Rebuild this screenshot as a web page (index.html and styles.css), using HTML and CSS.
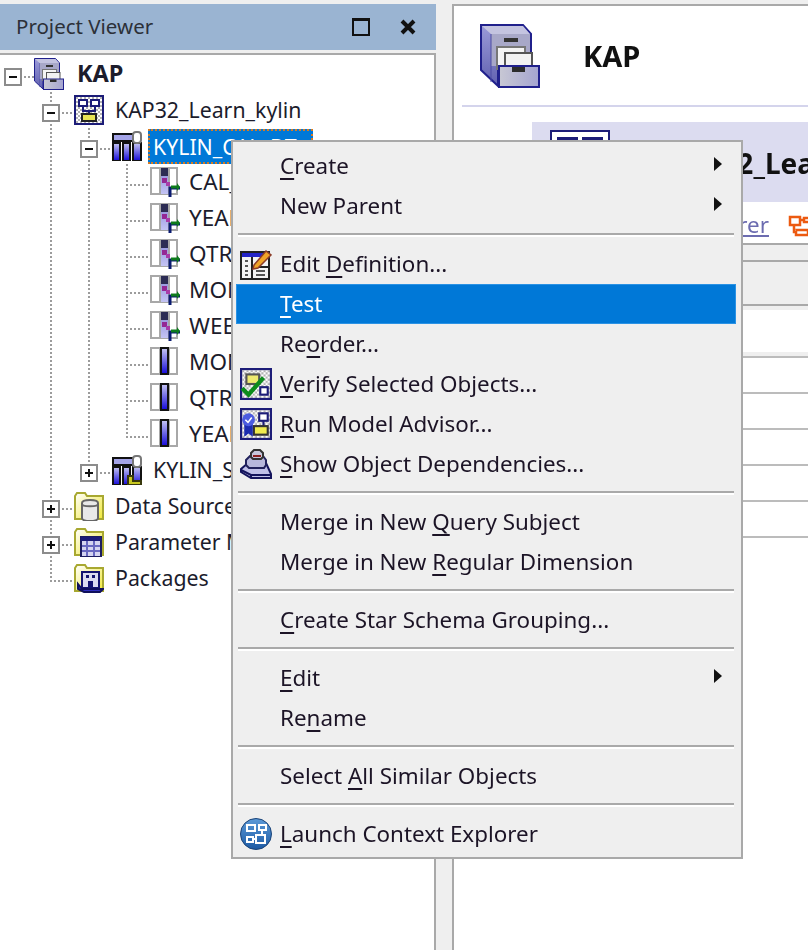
FILE: index.html
```html
<!DOCTYPE html>
<html lang="en">
<head>
    <meta charset="UTF-8">
    <title>Project Viewer</title>
    <link rel="stylesheet" href="styles.css">
</head>
<body>
    <!-- shared icons -->
    <svg class="icon-defs" aria-hidden="true">
        <defs>
            <pattern id="checker" width="4" height="4" patternUnits="userSpaceOnUse">
                <rect width="4" height="4" fill="#fff"/>
                <rect width="2" height="2" fill="#b4b4b4"/>
                <rect x="2" y="2" width="2" height="2" fill="#b4b4b4"/>
            </pattern>
            <linearGradient id="colBlue" x1="0" y1="0" x2="0" y2="1">
                <stop offset="0" stop-color="#c8c8f4"/>
                <stop offset="1" stop-color="#1408d8"/>
            </linearGradient>
            <linearGradient id="colPale" x1="0" y1="0" x2="0" y2="1">
                <stop offset="0" stop-color="#8a8ad8"/>
                <stop offset="1" stop-color="#c4c4f4"/>
            </linearGradient>
            <linearGradient id="drawerFace" x1="0" y1="0" x2="1" y2="0">
                <stop offset="0" stop-color="#c8c8d4"/>
                <stop offset="1" stop-color="#a4a4d0"/>
            </linearGradient>
            <linearGradient id="cabSide" x1="0" y1="0" x2="0" y2="1">
                <stop offset="0" stop-color="#9a9ad8"/>
                <stop offset="1" stop-color="#6060b0"/>
            </linearGradient>
            <linearGradient id="folderFill" x1="0" y1="0" x2="1" y2="1">
                <stop offset="0" stop-color="#fff"/>
                <stop offset="1" stop-color="#f0e838"/>
            </linearGradient>
            <linearGradient id="orb" x1="0" y1="0" x2="0" y2="1">
                <stop offset="0" stop-color="#5c9ad8"/>
                <stop offset="1" stop-color="#1c5aa4"/>
            </linearGradient>

            <symbol id="i-minus" viewBox="0 0 18 18">
                <rect x="1" y="1" width="16" height="16" fill="#fff" stroke="#8c8c8c" stroke-width="2"/>
                <rect x="5" y="8" width="8" height="2" fill="#111"/>
            </symbol>
            <symbol id="i-plus" viewBox="0 0 18 18">
                <rect x="1" y="1" width="16" height="16" fill="#fff" stroke="#8c8c8c" stroke-width="2"/>
                <rect x="5" y="8" width="8" height="2" fill="#111"/>
                <rect x="8" y="5" width="2" height="8" fill="#111"/>
            </symbol>

            <symbol id="i-cabinet" viewBox="0 0 60 64">
                <path d="M1 1H43L51 10V40H18V62L1 46Z" fill="url(#cabSide)" stroke="#20208c" stroke-width="2"/>
                <path d="M2 2H43L50 10H11Z" fill="#c4c4e0"/>
                <rect x="11" y="10" width="39" height="32" fill="#a8a8c8"/>
                <path d="M11 10V58" stroke="#4c4ca4" stroke-width="1"/>
                <rect x="24" y="14" width="14" height="4" fill="#333"/>
                <rect x="17" y="23" width="28" height="22" fill="#f4f4f4" stroke="#777" stroke-width="2"/>
                <rect x="25" y="29" width="27" height="16" fill="#f2f2f2" stroke="#555" stroke-width="2"/>
                <rect x="19" y="42" width="40" height="21" fill="url(#drawerFace)" stroke="#20208c" stroke-width="2"/>
                <rect x="32" y="43" width="13" height="5" fill="#2c2c2c"/>
            </symbol>

            <symbol id="i-model" viewBox="0 0 30 30">
                <rect x="1" y="1" width="28" height="28" fill="url(#checker)" stroke="#1c1c78" stroke-width="2"/>
                <rect x="5" y="5" width="8" height="6" fill="#fff" stroke="#1c1c78" stroke-width="2"/>
                <rect x="17" y="5" width="8" height="6" fill="#fff" stroke="#1c1c78" stroke-width="2"/>
                <path d="M9 11V16H21V11M15 16V20" fill="none" stroke="#1c1c78" stroke-width="2"/>
                <rect x="8" y="19" width="14" height="7" fill="#e8e454" stroke="#222" stroke-width="2"/>
            </symbol>
            <symbol id="i-model-large" viewBox="0 0 60 60">
                <rect x="1" y="1" width="58" height="58" fill="#fff" stroke="#1c1c78" stroke-width="2"/>
                <rect x="9" y="9" width="17" height="14" fill="#fff" stroke="#1c1c78" stroke-width="4"/>
                <rect x="34" y="9" width="17" height="14" fill="#fff" stroke="#1c1c78" stroke-width="4"/>
            </symbol>

            <symbol id="i-subject" viewBox="0 0 30 30">
                <rect x="1" y="3" width="24" height="7" fill="#a4a4e8" stroke="#111" stroke-width="2"/>
                <rect x="1" y="12" width="7" height="18" fill="url(#colBlue)" stroke="#111" stroke-width="2"/>
                <rect x="11" y="12" width="7" height="18" fill="url(#colBlue)" stroke="#111" stroke-width="2"/>
                <rect x="21" y="12" width="8" height="18" fill="url(#colBlue)" stroke="#111" stroke-width="2"/>
                <rect x="21" y="1" width="8" height="11" rx="3" fill="#fff" stroke="#777" stroke-width="2"/>
            </symbol>
            <symbol id="i-subject-key" viewBox="0 0 30 30">
                <use href="#i-subject"/>
                <path d="M16 30V21H21V26H29V30Z" fill="#c8c820" stroke="#38380c" stroke-width="2"/>
            </symbol>

            <symbol id="i-calc" viewBox="0 0 30 30">
                <rect x="1" y="1" width="26" height="26" fill="#fff" stroke="#a8a8a8" stroke-width="2"/>
                <path d="M10 1V27M19 1V27" stroke="#a8a8a8" stroke-width="2"/>
                <rect x="11" y="1" width="7" height="26" fill="url(#colPale)"/>
                <rect x="11" y="1" width="7" height="8" fill="#2c2c54"/>
                <rect x="12" y="11" width="5" height="5" fill="#942894"/>
                <rect x="16" y="15" width="4" height="4" fill="#a83ca8"/>
                <path d="M20 30V21H30" fill="none" stroke="#0a1a70" stroke-width="3"/>
                <path d="M21 20H27" stroke="#0e7c1c" stroke-width="3"/>
                <path d="M27 16L30 20L27 24Z" fill="#0e7c1c"/>
            </symbol>
            <symbol id="i-measure" viewBox="0 0 30 30">
                <rect x="1" y="1" width="26" height="26" fill="#fff" stroke="#a8a8a8" stroke-width="2"/>
                <path d="M10 1V27M19 1V27" stroke="#a8a8a8" stroke-width="2"/>
                <rect x="11" y="1" width="7" height="26" fill="url(#colBlue)" stroke="#111" stroke-width="2"/>
            </symbol>

            <symbol id="i-folder" viewBox="0 0 30 30">
                <path d="M1 28V5L3 2H11L13 5H29V28Z" fill="url(#folderFill)" stroke="#a8a830" stroke-width="2"/>
            </symbol>
            <symbol id="i-folder-db" viewBox="0 0 30 30">
                <use href="#i-folder"/>
                <path d="M8 12C8 8 24 8 24 12V27C24 31 8 31 8 27Z" fill="#e8e8e8" stroke="#666" stroke-width="2"/>
                <path d="M8 13C8 16 24 16 24 13" fill="none" stroke="#666" stroke-width="2"/>
            </symbol>
            <symbol id="i-folder-param" viewBox="0 0 30 30">
                <use href="#i-folder"/>
                <rect x="7" y="10" width="20" height="20" fill="#d4d4f0" stroke="#1c1c60" stroke-width="2"/>
                <rect x="7" y="10" width="20" height="4" fill="#1c1c78"/>
                <path d="M8 19H26M8 24H26M13 14V29M20 14V29" stroke="#6868c0" stroke-width="2"/>
            </symbol>
            <symbol id="i-folder-pkg" viewBox="0 0 30 30">
                <use href="#i-folder"/>
                <rect x="8" y="9" width="17" height="16" fill="#dcdcf0" stroke="#141470" stroke-width="2"/>
                <rect x="12" y="12" width="3" height="3" fill="#141470"/>
                <rect x="18" y="12" width="3" height="3" fill="#141470"/>
                <rect x="14" y="18" width="5" height="7" fill="#141470"/>
                <path d="M4 21V26L10 29H26L29 26H8Z" fill="#3030c0" stroke="#10105c" stroke-width="2"/>
            </symbol>

            <symbol id="i-edit" viewBox="0 0 32 32">
                <rect x="1" y="4" width="28" height="27" fill="#f4f4f4" stroke="#222" stroke-width="2"/>
                <rect x="2" y="5" width="26" height="4" fill="#2424c8"/>
                <path d="M12 9V30M12 19H28" stroke="#222" stroke-width="2"/>
                <path d="M5 13H8M5 18H8M5 23H8M5 27H8M16 23H25M16 27H25" stroke="#555" stroke-width="2"/>
                <path d="M14 17L26 3L31 7L18 20L13 21Z" fill="#f0a428" stroke="#8c3c28" stroke-width="1.5"/>
            </symbol>
            <symbol id="i-verify" viewBox="0 0 30 30">
                <rect x="1" y="1" width="28" height="28" fill="url(#checker)" stroke="#1c1c78" stroke-width="2"/>
                <rect x="6" y="6" width="12" height="9" fill="#eeea70" stroke="#555" stroke-width="2"/>
                <rect x="19" y="18" width="7" height="7" fill="#fff" stroke="#1c1c78" stroke-width="2"/>
                <path d="M2 19L8 25L22 9" fill="none" stroke="#0c8c1c" stroke-width="4"/>
            </symbol>
            <symbol id="i-advisor" viewBox="0 0 30 30">
                <rect x="1" y="1" width="28" height="28" fill="url(#checker)" stroke="#1c1c78" stroke-width="2"/>
                <rect x="18" y="5" width="8" height="7" fill="#fff" stroke="#1c1c78" stroke-width="2"/>
                <path d="M22 12V17" stroke="#1c1c78" stroke-width="2"/>
                <rect x="13" y="17" width="13" height="8" fill="#f0ec50" stroke="#333" stroke-width="2"/>
                <path d="M4 15V27L8 24L12 27V15Z" fill="#1c2cb0"/>
                <circle cx="8" cy="11" r="6" fill="#4c5ce0"/>
                <path d="M5 11L7.5 13.5L11 9" fill="none" stroke="#fff" stroke-width="1.5"/>
            </symbol>
            <symbol id="i-deps" viewBox="0 0 32 32">
                <path d="M1 21L8 15H26L31 26V30H11L1 24Z" fill="#c0c0e8" stroke="#14145c" stroke-width="2"/>
                <path d="M1 22L11 27H31M11 27V30" fill="none" stroke="#14145c" stroke-width="2"/>
                <path d="M6 12L10 8H23L26 12V17L24 20H9L6 17Z" fill="#b8b8dc" stroke="#22225c" stroke-width="2"/>
                <path d="M11 5L14 2H20L23 5V9L21 11H13L11 9Z" fill="#c8c8dc" stroke="#333" stroke-width="2"/>
                <path d="M13 8H21" stroke="#8c2020" stroke-width="2"/>
            </symbol>
            <symbol id="i-launch" viewBox="0 0 32 32">
                <circle cx="16" cy="16" r="15.5" fill="url(#orb)" stroke="#1c4478" stroke-width="1"/>
                <g fill="none" stroke="#fff" stroke-width="2">
                    <rect x="7" y="7" width="8" height="6"/>
                    <rect x="19" y="7" width="7" height="5"/>
                    <rect x="7" y="19" width="6" height="5"/>
                    <rect x="16" y="17" width="9" height="8"/>
                    <path d="M22 12V17M13 21H16"/>
                </g>
            </symbol>
            <symbol id="i-context" viewBox="0 0 24 22">
                <g fill="#fff" stroke="#ec5a10" stroke-width="2.5">
                    <rect x="2" y="2" width="10" height="8"/>
                    <rect x="16" y="3" width="10" height="4"/>
                    <rect x="8" y="15" width="12" height="5"/>
                    <path d="M6 10V17H8M12 5H16"/>
                </g>
            </symbol>
        </defs>
    </svg>

    <div class="workspace">
        <div class="viewer">
            <div class="viewer-title">
                <span class="viewer-name">Project Viewer</span>
                <span class="win-restore"></span>
                <svg class="win-close" viewBox="0 0 16 16" aria-label="Close"><path d="M2 2L14 14M14 2L2 14" stroke="#111" stroke-width="4"/></svg>
            </div>
            <div class="tree-panel">
                <ul class="tree">
                    <li>
                        <div class="row"><svg class="toggle"><use href="#i-minus"/></svg><svg class="node-icon root-icon"><use href="#i-cabinet"/></svg><span class="label bold">KAP</span></div>
                        <ul>
                            <li>
                                <div class="row"><svg class="toggle"><use href="#i-minus"/></svg><svg class="node-icon"><use href="#i-model"/></svg><span class="label">KAP32_Learn_kylin</span></div>
                                <ul>
                                    <li>
                                        <div class="row"><svg class="toggle"><use href="#i-minus"/></svg><svg class="node-icon"><use href="#i-subject"/></svg><span class="label selected">KYLIN_CAL_DT</span></div>
                                        <ul class="leaves">
                                            <li><div class="row"><svg class="node-icon"><use href="#i-calc"/></svg><span class="label">CAL_DT</span></div></li>
                                            <li><div class="row"><svg class="node-icon"><use href="#i-calc"/></svg><span class="label">YEAR_BEG_DT</span></div></li>
                                            <li><div class="row"><svg class="node-icon"><use href="#i-calc"/></svg><span class="label">QTR_BEG_DT</span></div></li>
                                            <li><div class="row"><svg class="node-icon"><use href="#i-calc"/></svg><span class="label">MONTH_BEG_DT</span></div></li>
                                            <li><div class="row"><svg class="node-icon"><use href="#i-calc"/></svg><span class="label">WEEK_BEG_DT</span></div></li>
                                            <li><div class="row"><svg class="node-icon"><use href="#i-measure"/></svg><span class="label">MONTH_CNT</span></div></li>
                                            <li><div class="row"><svg class="node-icon"><use href="#i-measure"/></svg><span class="label">QTR_CNT</span></div></li>
                                            <li><div class="row"><svg class="node-icon"><use href="#i-measure"/></svg><span class="label">YEAR_CNT</span></div></li>
                                        </ul>
                                    </li>
                                    <li>
                                        <div class="row"><svg class="toggle"><use href="#i-plus"/></svg><svg class="node-icon"><use href="#i-subject-key"/></svg><span class="label">KYLIN_SALES</span></div>
                                    </li>
                                </ul>
                            </li>
                            <li><div class="row"><svg class="toggle"><use href="#i-plus"/></svg><svg class="node-icon"><use href="#i-folder-db"/></svg><span class="label">Data Sources</span></div></li>
                            <li><div class="row"><svg class="toggle"><use href="#i-plus"/></svg><svg class="node-icon"><use href="#i-folder-param"/></svg><span class="label">Parameter Maps</span></div></li>
                            <li><div class="row no-toggle"><svg class="node-icon"><use href="#i-folder-pkg"/></svg><span class="label">Packages</span></div></li>
                        </ul>
                    </li>
                </ul>
            </div>
        </div>

        <div class="explorer">
            <div class="explorer-head">
                <svg class="cabinet"><use href="#i-cabinet"/></svg>
                <span class="explorer-name">KAP</span>
            </div>
            <div class="explorer-rule"></div>
            <div class="banner">
                <svg class="banner-icon"><use href="#i-model-large"/></svg>
                <span class="banner-name">KAP32_Learn_kylin</span>
            </div>
            <div class="links">
                <a class="link" href="#">Launch Context Explorer</a>
                <svg class="context-icon"><use href="#i-context"/></svg>
            </div>
            <div class="tabs"></div>
            <div class="table-tools"></div>
            <div class="table-head"></div>
            <div class="table-row"></div>
            <div class="table-row"></div>
            <div class="table-row"></div>
            <div class="table-row"></div>
            <div class="table-row"></div>
            <div class="table-row"></div>
        </div>
    </div>

    <div class="context-menu">
        <div class="item"><span class="text"><u>C</u>reate</span><i class="arrow"></i></div>
        <div class="item"><span class="text">New Parent</span><i class="arrow"></i></div>
        <div class="sep"></div>
        <div class="item"><svg class="item-icon"><use href="#i-edit"/></svg><span class="text">Edit <u>D</u>efinition...</span></div>
        <div class="item active"><span class="text"><u>T</u>est</span></div>
        <div class="item"><span class="text">Re<u>o</u>rder...</span></div>
        <div class="item"><svg class="item-icon"><use href="#i-verify"/></svg><span class="text"><u>V</u>erify Selected Objects...</span></div>
        <div class="item"><svg class="item-icon"><use href="#i-advisor"/></svg><span class="text"><u>R</u>un Model Advisor...</span></div>
        <div class="item"><svg class="item-icon"><use href="#i-deps"/></svg><span class="text"><u>S</u>how Object Dependencies...</span></div>
        <div class="sep"></div>
        <div class="item"><span class="text">Merge in New <u>Q</u>uery Subject</span></div>
        <div class="item"><span class="text">Merge in New <u>R</u>egular Dimension</span></div>
        <div class="sep"></div>
        <div class="item"><span class="text"><u>C</u>reate Star Schema Grouping...</span></div>
        <div class="sep"></div>
        <div class="item"><span class="text"><u>E</u>dit</span><i class="arrow"></i></div>
        <div class="item"><span class="text">Re<u>n</u>ame</span></div>
        <div class="sep"></div>
        <div class="item"><span class="text">Select <u>A</u>ll Similar Objects</span></div>
        <div class="sep"></div>
        <div class="item"><svg class="item-icon"><use href="#i-launch"/></svg><span class="text"><u>L</u>aunch Context Explorer</span></div>
    </div>
</body>
</html>
```

FILE: styles.css
```css
:root {
    --chrome: #efefef;
    --edge: #a9a9a9;
    --guide: #9c9c9c;
    --text: #1c1c2c;
    --select: #0078d7;
    /* the capture is an upscaled one, everything is a little soft */
    --soft: blur(0.4px);
}
html, body {
    margin: 0;
    padding: 0;
}
body {
    position: relative;
    height: 950px;
    overflow: hidden;
    background-color: var(--chrome);
    color: var(--text);
    font-family: "Noto Sans", "Open Sans", sans-serif;
    font-size: 21.3px;
}
.icon-defs {
    position: absolute;
    width: 0;
    height: 0;
}
.workspace {
    display: flex;
    height: 946px;
    padding-top: 4px;
    filter: var(--soft);
}

/* Left pane */
.viewer {
    display: flex;
    flex-direction: column;
    width: 436px;
    flex: none;
}
.viewer-title {
    display: flex;
    align-items: center;
    height: 46px;
    flex: none;
    padding-left: 16px;
    background-color: #9ab4d2;
}
.viewer-name {
    flex: 1;
    margin-top: -2px;
    font-size: 20.5px;
    color: #2c3038;
}
.win-restore {
    width: 14px;
    height: 13px;
    border: 2px solid #111;
    border-top-width: 3px;
    margin-right: 30px;
}
.win-close {
    width: 16px;
    height: 16px;
    margin-right: 20px;
}
.tree-panel {
    flex: 1;
    margin-top: 3px;
    border-top: 2px solid var(--edge);
    border-right: 2px solid var(--edge);
    background-color: #fff;
    padding-top: 1px;
}

/* Tree */
.tree, .tree ul {
    list-style: none;
    margin: 0;
    padding: 0;
}
.tree ul {
    padding-left: 38px;
}
.tree li {
    position: relative;
}
.tree ul > li::before {
    content: "";
    position: absolute;
    left: 12px;
    top: 0;
    bottom: 0;
    width: 2px;
    background: linear-gradient(var(--guide) 50%, transparent 50%) 0 0 / 2px 4px repeat-y;
}
.tree ul > li:last-child::before {
    bottom: auto;
    height: 21px;
}
.tree li::after {
    content: "";
    position: absolute;
    left: 12px;
    top: 20px;
    width: 22px;
    height: 2px;
    background: linear-gradient(90deg, var(--guide) 50%, transparent 50%) 0 0 / 4px 2px repeat-x;
}
.row {
    position: relative;
    z-index: 1;
    display: flex;
    align-items: center;
    height: 36px;
}
.toggle {
    width: 18px;
    height: 18px;
    flex: none;
    margin: 6px 0 0 4px;
}
.node-icon {
    width: 30px;
    height: 30px;
    flex: none;
    margin-left: 14px;
}
.root-icon {
    height: 32px;
    margin-left: 12px;
}
.root-icon + .label {
    margin-left: 13px;
}
.no-toggle {
    padding-left: 22px;
}
.leaves .node-icon {
    margin-left: 36px;
}
.label {
    margin: -2px 0 0 11px;
    white-space: nowrap;
}
.leaves .label {
    margin-left: 9px;
    font-size: 22.5px;
}
.bold {
    font-size: 23.5px;
    font-weight: 700;
}
.selected {
    margin: 0 0 0 6px;
    padding: 0 16px 0 5px;
    line-height: 35px;
    background-color: var(--select);
    color: #fff;
    outline: 2px dotted #d87a20;
    outline-offset: -2px;
}

/* Right pane */
.explorer {
    flex: 1;
    display: flex;
    flex-direction: column;
    min-width: 0;
    overflow: hidden;
    margin-left: 16px;
    border-top: 2px solid var(--edge);
    border-left: 2px solid var(--edge);
    background-color: #fff;
}
.explorer-head {
    display: flex;
    align-items: center;
    height: 99px;
    flex: none;
    padding-left: 26px;
}
.cabinet {
    width: 60px;
    height: 64px;
    flex: none;
}
.explorer-name {
    margin-left: 43px;
    font-size: 29px;
    font-weight: 700;
    color: #111;
}
.explorer-rule {
    height: 2px;
    flex: none;
    margin-left: 8px;
    background-color: #d4d4ec;
}
.banner {
    display: flex;
    align-items: flex-start;
    height: 72px;
    flex: none;
    margin: 15px 0 0 78px;
    padding: 8px 0 0 18px;
    background-color: #dcdcf0;
    white-space: nowrap;
}
.banner-icon {
    width: 60px;
    height: 60px;
    flex: none;
}
.banner-name {
    margin: 14px 0 0 56px;
    font-size: 28px;
    font-weight: 700;
    color: #111;
}
.links {
    display: flex;
    justify-content: flex-end;
    align-items: center;
    height: 41px;
    flex: none;
    white-space: nowrap;
}
.link {
    margin: 4px 19px 0 0;
    font-size: 22.4px;
    color: #6c6cb0;
}
.context-icon {
    width: 24px;
    height: 22px;
    flex: none;
    margin: 6px -4px 0 0;
}
.tabs {
    height: 15px;
    flex: none;
    border-top: 2px solid var(--edge);
    background-color: var(--chrome);
}
.table-tools {
    height: 42px;
    flex: none;
    border-top: 2px solid var(--edge);
    background-color: var(--chrome);
}
.table-head {
    height: 46px;
    flex: none;
    border-top: 2px solid var(--edge);
    border-bottom: 4px solid var(--chrome);
    background-color: #fff;
    background-clip: padding-box;
    box-shadow: inset 0 4px 0 var(--chrome);
}
.table-row {
    height: 34px;
    flex: none;
    border-top: 2px solid #bcbcbc;
    background-color: #fff;
}

/* Context menu */
.context-menu {
    position: absolute;
    z-index: 5;
    left: 231px;
    top: 140px;
    width: 500px;
    display: flex;
    flex-direction: column;
    padding: 4px 5px 3px 3px;
    border: 2px solid var(--edge);
    background-color: var(--chrome);
    color: #1c1426;
    font-size: 22.4px;
    filter: var(--soft);
}
.item {
    display: flex;
    align-items: center;
    height: 40px;
    box-sizing: border-box;
    padding-left: 44px;
    position: relative;
}
.item.active {
    background-color: var(--select);
    color: #fff;
    box-shadow: inset 0 0 0 1px #2a92e4;
}
.item-icon {
    position: absolute;
    left: 4px;
    top: 4px;
    width: 32px;
    height: 32px;
}
.text {
    flex: 1;
    margin-top: -2px;
    white-space: nowrap;
}
.text u {
    text-underline-offset: 4px;
    text-decoration-thickness: 2px;
}
.arrow {
    width: 0;
    height: 0;
    margin: -4px 14px 0 0;
    border-top: 7px solid transparent;
    border-bottom: 7px solid transparent;
    border-left: 8px solid #111;
}
.sep {
    height: 2px;
    margin: 7px 2px 7px;
    background-color: var(--edge);
    border-bottom: 2px solid #fff;
}
```
